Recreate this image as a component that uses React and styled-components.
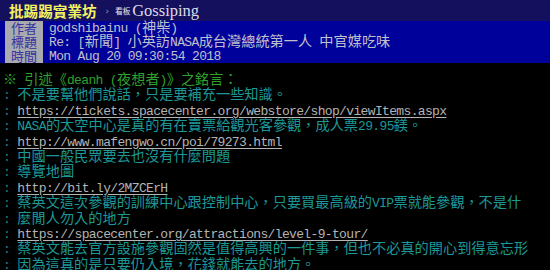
import React from "react";
import styled, { createGlobalStyle } from "styled-components";

const GlobalStyle = createGlobalStyle`
  html, body { margin: 0; padding: 0; background: #000; }
  body { overflow: hidden; }
`;

const CJK = `"Noto Sans CJK TC", "Noto Sans CJK SC", sans-serif`;

const Page = styled.div`
  width: 550px;
  height: 270px;
  background: #000;
  font-family: "Liberation Mono", ${CJK};
  font-size: 14.2px;
  overflow: hidden;
`;

const TopBar = styled.div`
  display: flex;
  align-items: center;
  height: 21px;
  padding-left: 9px;
  background: #14105e;
`;

const Logo = styled.span`
  font-family: ${CJK};
  font-weight: 700;
  font-size: 14.6px;
  color: #f2f25e;
  line-height: 21px;
`;

const Crumb = styled.span`
  margin-left: 9px;
  font-family: "DejaVu Sans", sans-serif;
  font-size: 9px;
  color: #9a9ab8;
`;

const BoardTag = styled.span`
  margin-left: 6px;
  font-family: ${CJK};
  font-size: 7.5px;
  color: #e8e8f0;
`;

const BoardName = styled.span`
  margin-left: 2px;
  font-family: "Liberation Serif", serif;
  font-size: 16.5px;
  color: #dcdce8;
  line-height: 21px;
`;

const Meta = styled.div`
  background: #00009a;
`;

const MetaRow = styled.div`
  display: flex;
  align-items: center;
  height: 14px;
`;

const MetaTag = styled.span`
  display: flex;
  align-items: center;
  justify-content: center;
  width: 38px;
  height: 14px;
  margin-left: 5px;
  background: #a9a9b0;
  color: #3434a0;
  font-family: ${CJK};
  font-size: 13px;
  line-height: 14px;
`;

const MetaValue = styled.span`
  margin-left: 6px;
  color: #c0c0cc;
  white-space: pre;
  line-height: 14px;
`;

const Content = styled.div`
  padding: 10px 0 0 3px;
`;

const LINE_COLORS = {
  quote: "#1c9898",
  header: "#2fa12f",
};

const Line = styled.div`
  height: 15.4px;
  line-height: 15.4px;
  white-space: pre;
  color: ${(p) => LINE_COLORS[p.$kind] || "#c0c0c0"};
`;

const Colon = styled.span`
  color: #138080;
`;

const Half = styled.span`
  font-family: "Liberation Mono", monospace;
  font-size: 13px;
  letter-spacing: -0.65px;
`;

const Link = styled.span`
  color: #b4b4b4;
  text-decoration: underline;
  text-underline-offset: 2px;
`;

function Mixed({ text }) {
  const parts = text.split(/([\u0000-\u007f]+)/).filter(Boolean);
  return parts.map((p, i) =>
    /^[\u0000-\u007f]+$/.test(p) ? <Half key={i}>{p}</Half> : <React.Fragment key={i}>{p}</React.Fragment>
  );
}

const lines = [
  { kind: "quote", text: "不是要幫他們說話，只是要補充一些知識。" },
  { kind: "link", text: "https://tickets.spacecenter.org/webstore/shop/viewItems.aspx" },
  { kind: "quote", text: "NASA的太空中心是真的有在賣票給觀光客參觀，成人票29.95鎂。" },
  { kind: "link", text: "http://www.mafengwo.cn/poi/79273.html" },
  { kind: "quote", text: "中國一般民眾要去也沒有什麼問題" },
  { kind: "quote", text: "導覽地圖" },
  { kind: "link", text: "http://bit.ly/2MZCErH" },
  { kind: "quote", text: "蔡英文這次參觀的訓練中心跟控制中心，只要買最高級的VIP票就能參觀，不是什" },
  { kind: "quote", text: "麼閒人勿入的地方" },
  { kind: "link", text: "https://spacecenter.org/attractions/level-9-tour/" },
  { kind: "quote", text: "蔡英文能去官方設施參觀固然是值得高興的一件事，但也不必真的開心到得意忘形" },
  { kind: "quote", text: "因為這真的是只要仍入境，花錢就能去的地方。" },
];

const meta = [
  ["作者", "godshibainu (神柴)"],
  ["標題", "Re: [新聞] 小英訪NASA成台灣總統第一人 中官媒吃味"],
  ["時間", "Mon Aug 20 09:30:54 2018"],
];

export default function App() {
  return (
    <>
      <GlobalStyle />
      <Page>
        <TopBar>
          <Logo>批踢踢實業坊</Logo>
          <Crumb>›</Crumb>
          <BoardTag>看板</BoardTag>
          <BoardName>Gossiping</BoardName>
        </TopBar>
        <Meta>
          {meta.map(([k, v]) => (
            <MetaRow key={k}>
              <MetaTag>{k}</MetaTag>
              <MetaValue>
                <Mixed text={v} />
              </MetaValue>
            </MetaRow>
          ))}
        </Meta>
        <Content>
          <Line $kind="header">
            <Mixed text="※ 引述《deanh (夜想者)》之銘言：" />
          </Line>
          {lines.map((l, i) => (
            <Line key={i} $kind="quote">
              <Colon>
                <Half>: </Half>
              </Colon>
              {l.kind === "link" ? (
                <Link>
                  <Half>{l.text}</Half>
                </Link>
              ) : (
                <Mixed text={l.text} />
              )}
            </Line>
          ))}
        </Content>
      </Page>
    </>
  );
}
